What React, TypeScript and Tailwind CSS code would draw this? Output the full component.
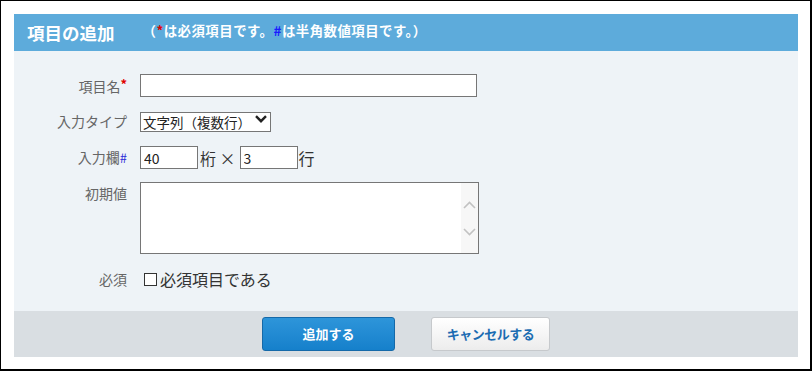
import React from 'react';

const labelCls = 'w-[113px] shrink-0 text-right text-[14px] leading-[18px] text-[#666]';

const Chevron: React.FC<{ up?: boolean }> = ({ up }) => (
  <svg width="13" height="8" viewBox="0 0 13 8" fill="none" stroke="#c2c2c2" strokeWidth="1.6">
    {up ? <path d="M1 7 L6.5 1.5 L12 7" /> : <path d="M1 1 L6.5 6.5 L12 1" />}
  </svg>
);

const App: React.FC = () => {
  return (
    <div className="w-[812px] h-[371px] bg-white border-l border-t border-r-2 border-b-2 border-black pl-[13px] pt-[13px] font-['Noto_Sans_CJK_JP','Noto_Sans',sans-serif]">
      <div className="w-[784px] h-[343px] flex flex-col">
        {/* header */}
        <div className="h-[37px] bg-[#5dabdb] flex items-center pl-[13px]">
          <span className="text-[17.5px] leading-[20px] font-bold text-white">項目の追加</span>
          <span className="ml-[28px] -mt-[6px] text-[13.4px] leading-[16px] font-bold text-white tracking-[0.5px]">
            （<span className="text-[#e00000]">*</span>は必須項目です。<span className="text-[#1a1aff]">#</span>は半角数値項目です。）
          </span>
        </div>

        {/* form */}
        <div className="h-[260px] bg-[#eef3f7] pt-[23px] flex flex-col">
          <div className="flex items-center h-[23px] mb-[14px]">
            <div className={labelCls}>
              項目名<span className="text-[#e00000] font-bold align-top text-[13px] leading-[14px]">*</span>
            </div>
            <input
              type="text"
              className="ml-[13px] w-[337px] h-[23px] bg-white border border-[#767676] px-[3px] text-[14px] outline-none"
            />
          </div>

          <div className="flex items-center h-[20px] mb-[15px]">
            <div className={labelCls}>入力タイプ</div>
            <div className="relative ml-[13px]">
              <select
                defaultValue="multi"
                className="appearance-none w-[131px] h-[20px] bg-white border border-[#767676] pl-[2px] text-[13.5px] leading-[18px] text-[#222] outline-none"
              >
                <option value="single">文字列（1行）</option>
                <option value="multi">文字列（複数行）</option>
              </select>
              <svg
                width="12"
                height="8"
                viewBox="0 0 12 8"
                fill="none"
                stroke="#222"
                strokeWidth="2.4"
                className="absolute right-[4px] top-[6px] pointer-events-none"
              >
                <path d="M1 1.2 L6 6.2 L11 1.2" />
              </svg>
            </div>
          </div>

          <div className="flex items-center h-[23px] mb-[13px]">
            <div className={labelCls}>
              入力欄<span className="text-[#2a2ad8] text-[13px]">#</span>
            </div>
            <input
              type="text"
              defaultValue="40"
              className="ml-[13px] w-[58px] h-[23px] bg-white border border-[#767676] px-[3px] text-[14px] text-[#222] outline-none"
            />
            <span className="ml-[2px] text-[16px] leading-[18px] text-[#333]">桁 × </span>
            <input
              type="text"
              defaultValue="3"
              className="ml-[4px] w-[58px] h-[23px] bg-white border border-[#767676] px-[3px] text-[14px] text-[#222] outline-none"
            />
            <span className="ml-[1px] text-[16px] leading-[18px] text-[#333]">行</span>
          </div>

          <div className="flex items-start h-[72px]">
            <div className={`${labelCls} pt-[2px]`}>初期値</div>
            <div className="ml-[13px] w-[339px] h-[72px] bg-white border border-[#767676] flex">
              <textarea className="flex-1 resize-none outline-none px-[3px] text-[14px]" />
              <div className="w-[17px] bg-[#f7f7f7] flex flex-col items-center pt-[18px] gap-[19px]">
                <Chevron up />
                <Chevron />
              </div>
            </div>
          </div>

          <div className="flex items-center h-[18px] mt-[16px]">
            <div className={labelCls}>必須</div>
            <label className="ml-[17px] flex items-center text-[16px] leading-[18px] text-[#333]">
              <span className="w-[13px] h-[13px] border border-[#333] bg-white mr-[3px]" />
              必須項目である
            </label>
          </div>
        </div>

        {/* footer */}
        <div className="h-[46px] bg-[#d9dee2] flex items-center justify-center gap-[36px]">
          <button className="w-[133px] h-[34px] rounded-[3px] border border-[#1569a8] bg-gradient-to-b from-[#2d95da] to-[#1580cb] text-white text-[13px] font-bold">
            追加する
          </button>
          <button className="w-[119px] h-[34px] rounded-[3px] border border-[#c6c9cc] bg-gradient-to-b from-white to-[#ececec] text-[#1b6cb2] text-[13px] font-bold tracking-[-0.5px]">
            キャンセルする
          </button>
        </div>
      </div>
    </div>
  );
};

export default App;
